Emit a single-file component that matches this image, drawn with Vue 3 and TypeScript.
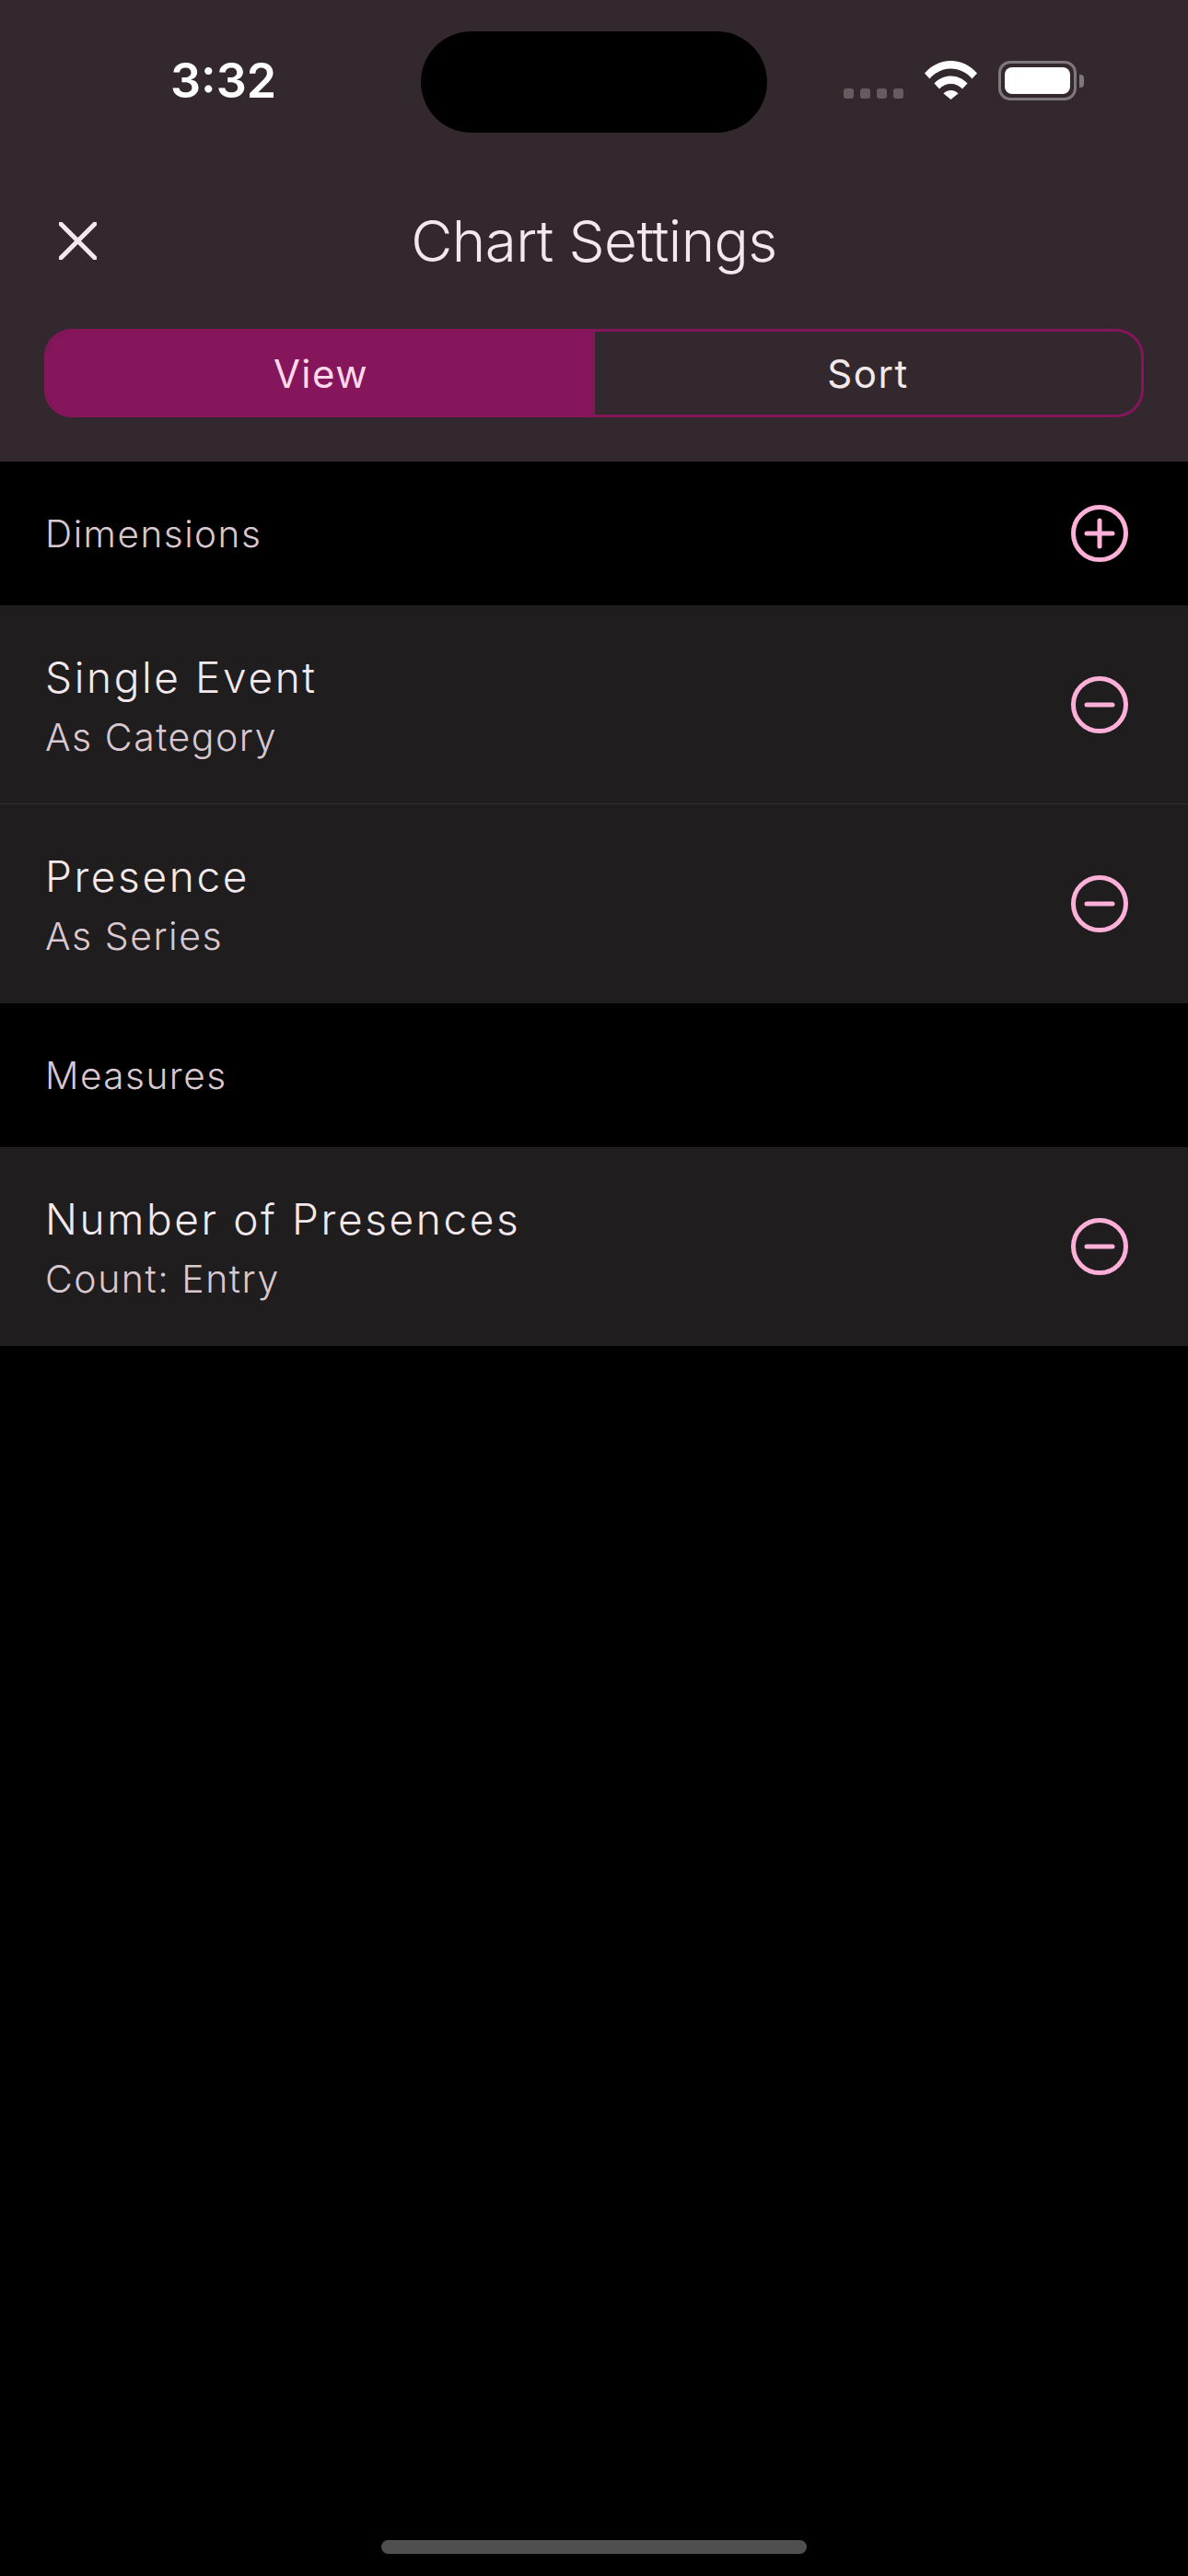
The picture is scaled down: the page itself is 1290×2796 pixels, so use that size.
<script setup lang="ts">
interface Row { title: string; sub: string }
const dimensions: Row[] = [
  { title: 'Single Event', sub: 'As Category' },
  { title: 'Presence', sub: 'As Series' },
]
const measures: Row[] = [{ title: 'Number of Presences', sub: 'Count: Entry' }]
</script>

<template>
  <div class="screen">
    <header class="top">
      <div class="status">
        <span class="time">3:32</span>
        <div class="island"></div>
        <div class="status-icons">
          <div class="dots"><i></i><i></i><i></i><i></i></div>
          <svg class="wifi" width="57" height="42" viewBox="0 0 57 42">
            <path fill="#fff" d="M0 13.5C7.5 5 17.5 0 28.5 0S49.500 5 57 13.500L51.500 19.500C45.500 12.500 37.500 8.500 28.500 8.500S11.500 12.500 5.500 19.500Z"/>
            <path fill="#fff" d="M10.500 24.500C15 19.500 21.500 16.500 28.500 16.500S42 19.500 46.500 24.500L41 30.500C37.800 27 33.500 25 28.500 25S19.200 27 16 30.500Z"/>
            <path fill="#fff" d="M20.500 35.500C22.500 33.200 25.300 32 28.500 32S34.500 33.200 36.500 35.500L28.500 42Z"/>
          </svg>
          <div class="battery">
            <div class="battery-case"><div class="battery-fill"></div></div>
            <div class="battery-nub"></div>
          </div>
        </div>
      </div>
      <div class="title-bar">
        <div class="close-cell">
          <svg class="close" width="41" height="41" viewBox="0 0 41 41">
            <path d="M2 2L39 39M39 2L2 39" stroke="#f3e9ec" stroke-width="5" stroke-linecap="round" fill="none"/>
          </svg>
        </div>
        <h1 class="title">Chart Settings</h1>
        <div></div>
      </div>
      <div class="segments">
        <div class="seg seg-active">View</div>
        <div class="seg">Sort</div>
      </div>
    </header>

    <section class="section-head">
      <span>Dimensions</span>
      <svg class="circle-icon" width="62" height="62" viewBox="0 0 62 62">
        <circle cx="31" cy="31" r="28.500" class="ring"/>
        <path d="M17 31H45M31 17V45" class="mark"/>
      </svg>
    </section>
    <div class="row" v-for="(r, i) in dimensions" :key="r.title" :class="{ divided: i < dimensions.length - 1 }">
      <div class="row-text">
        <div class="row-title">{{ r.title }}</div>
        <div class="row-sub">{{ r.sub }}</div>
      </div>
      <svg class="circle-icon" width="62" height="62" viewBox="0 0 62 62">
        <circle cx="31" cy="31" r="28.500" class="ring"/>
        <path d="M17 31H45" class="mark"/>
      </svg>
    </div>

    <section class="section-head">
      <span>Measures</span>
    </section>
    <div class="row" v-for="r in measures" :key="r.title">
      <div class="row-text">
        <div class="row-title">{{ r.title }}</div>
        <div class="row-sub">{{ r.sub }}</div>
      </div>
      <svg class="circle-icon" width="62" height="62" viewBox="0 0 62 62">
        <circle cx="31" cy="31" r="28.500" class="ring"/>
        <path d="M17 31H45" class="mark"/>
      </svg>
    </div>

    <div class="spacer"></div>
    <div class="home-wrap"><div class="home"></div></div>
  </div>
</template>

<style>
html, body { margin: 0; background: #000; }
</style>

<style scoped>
.screen {
  width: 1290px;
  height: 2796px;
  background: #000;
  display: flex;
  flex-direction: column;
  font-family: Inter, "Noto Sans", sans-serif;
  overflow: hidden;
}
.top {
  background: #32282d;
  height: 501px;
  flex: none;
  display: flex;
  flex-direction: column;
}
.status {
  height: 220px;
  flex: none;
  box-sizing: border-box;
  padding-top: 34px;
  display: flex;
  align-items: flex-start;
}
.time {
  width: 457px;
  flex: none;
  box-sizing: border-box;
  padding-left: 185px;
  padding-top: 23px;
  font-size: 52px;
  line-height: 62px;
  font-weight: 600;
  color: #fff;
}
.island {
  width: 376px;
  height: 110px;
  border-radius: 55px;
  background: #000;
  flex: none;
}
.status-icons {
  display: flex;
  align-items: flex-end;
  padding-left: 83px;
  height: 74px;
}
.dots { display: flex; gap: 7px; margin-right: 23px; margin-bottom: 1px; }
.dots i { display: block; width: 11px; height: 11px; border-radius: 3px; background: #655c60; }
.wifi { display: block; margin-right: 23px; }
.battery { display: flex; align-items: center; margin-bottom: -1px; }
.battery-case {
  width: 85px;
  height: 43px;
  box-sizing: border-box;
  border: 3px solid #7f787b;
  border-radius: 13px;
  padding: 4px;
}
.battery-fill { width: 100%; height: 100%; border-radius: 8px; background: #fff; }
.battery-nub { width: 5px; height: 14px; margin-left: 3px; background: #7f787b; border-radius: 0 4px 4px 0; }
.title-bar {
  height: 84px;
  flex: none;
  display: grid;
  grid-template-columns: 1fr auto 1fr;
  align-items: center;
}
.close-cell { padding-left: 64px; }
.close { display: block; margin-top: -2px; }
.title {
  margin: 0;
  font-size: 62px;
  line-height: 84px;
  font-weight: 300;
  letter-spacing: -0.600px;
  color: #f3e9ec;
}
.segments {
  margin: 53px 48px 0;
  height: 96px;
  flex: none;
  display: flex;
  box-sizing: border-box;
  border: 3px solid #86165b;
  border-radius: 30px;
  overflow: hidden;
}
.seg {
  flex: 1;
  display: flex;
  align-items: center;
  justify-content: center;
  font-size: 42px;
  font-weight: 400;
  letter-spacing: 1.500px;
  color: #f3e9ec;
}
.seg-active { background: #86165b; color: #ffd9ea; flex: none; width: 595px; }
.section-head {
  height: 156px;
  flex: none;
  box-sizing: border-box;
  padding: 0 65px 0 49px;
  display: flex;
  align-items: center;
  justify-content: space-between;
  font-size: 40.500px;
  font-weight: 300;
  letter-spacing: 1.500px;
  color: #d8c8cf;
}
.row {
  height: 216px;
  flex: none;
  box-sizing: border-box;
  padding: 0 65px 0 49px;
  display: flex;
  align-items: center;
  justify-content: space-between;
  background: #201d1f;
}
.divided { box-shadow: inset 0 -1px 0 #333033; }
.row-text { padding-top: 8px; }
.row-title { font-size: 46px; line-height: 62px; font-weight: 300; letter-spacing: 2.600px; color: #f3e9ec; }
.row-sub { font-size: 41px; line-height: 68px; font-weight: 300; letter-spacing: 1.500px; color: #d8c8cf; }
.circle-icon { display: block; flex: none; }
.ring { fill: none; stroke: #ffb0d8; stroke-width: 5; }
.mark { fill: none; stroke: #ffb0d8; stroke-width: 5; stroke-linecap: round; }
.spacer { flex: 1; }
.home-wrap { height: 39px; flex: none; display: flex; justify-content: center; }
.home { width: 462px; height: 15px; border-radius: 8px; background: #4f4f4f; }
</style>
